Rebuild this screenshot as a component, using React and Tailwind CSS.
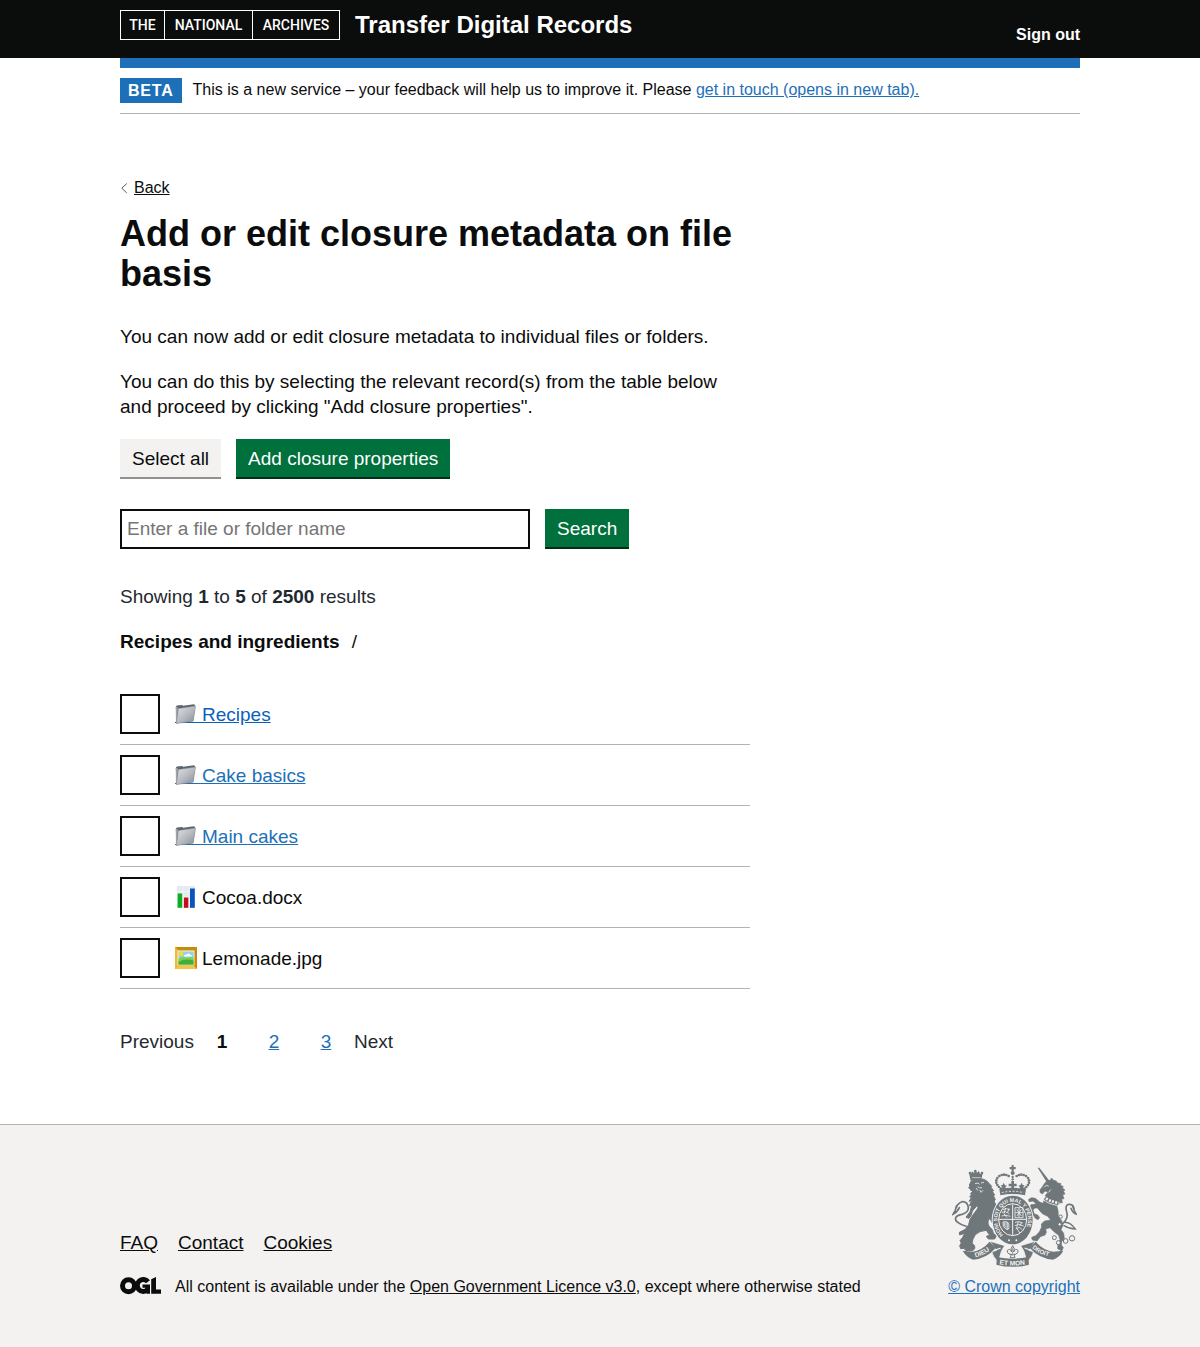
import React from "react";

const linkBlue = "text-[#1d70b8] underline";

function FolderIcon() {
  return (
    <svg className="h-6 w-[27px] shrink-0" viewBox="0 -2 27 24" aria-hidden="true">
      <defs>
        <linearGradient id="folderFront" x1="0" y1="0" x2="1" y2="1">
          <stop offset="0" stopColor="#dfe2e6" />
          <stop offset="0.55" stopColor="#b4b8be" />
          <stop offset="1" stopColor="#84888f" />
        </linearGradient>
      </defs>
      <rect x="0" y="18" width="27" height="1" fill="currentColor" />
      <path d="M0.8 3L1.8 1.4L7 1L8.2 1.8L18.8 0.2L20 1V4L18 17L1.6 19.4Z" fill="#5d666d" />
      <path d="M0.8 3.2L2.4 2.8L3 5L1.6 19.4L0.9 18.8Z" fill="#9ea4aa" />
      <path d="M3.4 4.6L20.7 1.9L18.2 17.2L1.4 19.6Z" fill="url(#folderFront)" stroke="#7d838a" strokeWidth="0.4" />
    </svg>
  );
}

function ChartIcon() {
  return (
    <svg className="h-6 w-[27px] shrink-0" viewBox="0 -1 27 24" aria-hidden="true">
      <rect x="2" y="0" width="18" height="22" fill="#e3eaf2" />
      <path d="M2 5.5H20M2 11H20M2 16.5H20M8 0V22M14 0V22" stroke="#f6f9fc" strokeWidth="0.7" />
      <rect x="2.6" y="7.5" width="4.6" height="14.3" fill="#0fae21" />
      <rect x="8.9" y="11.5" width="4.4" height="10.3" fill="#c80c1b" />
      <rect x="15" y="2.5" width="4.8" height="19.3" fill="#0b54bd" />
    </svg>
  );
}

function PictureIcon() {
  return (
    <svg className="h-6 w-[27px] shrink-0" viewBox="0 -1 27 24" aria-hidden="true">
      <rect x="0" y="0" width="22" height="22" fill="#d59a16" />
      <path d="M0 0H22L19 3H3Z" fill="#c78a10" />
      <path d="M0 0L3 3V19L0 22Z" fill="#eebb35" />
      <path d="M22 0L19 3V19L22 22Z" fill="#c68a10" />
      <path d="M0 22L3 19H19L22 22Z" fill="#f4c542" />
      <rect x="2.5" y="3.5" width="17" height="15" fill="#fff0b8" />
      <rect x="3.5" y="4.5" width="15" height="13" fill="#8ed1f2" />
      <circle cx="6.2" cy="6.8" r="2.2" fill="#ffd92e" />
      <path d="M9 9Q10 6.5 12 7.5Q14 5.5 15.5 8Q17.5 8 17 9.5H9Z" fill="#fff" />
      <path d="M3.5 11.5Q8 9 12 11Q15 9.5 18.5 10.5V17.5H3.5Z" fill="#7fd04c" />
      <path d="M3.5 15Q10 11 18.5 13.5V17.5H3.5Z" fill="#42ae38" />
    </svg>
  );
}

function OglLogo() {
  return (
    <svg className="h-5 w-[41px] shrink-0" viewBox="0 0 41 20" role="img" aria-label="OGL">
      <g fill="none" stroke="#0b0c0c" strokeWidth="5">
        <circle cx="8.5" cy="8.7" r="6" />
        <path d="M28 4.8A6 6 0 1 0 27.5 12.8" />
      </g>
      <path d="M22.5 7.4H30V16.8H26.6L25.5 13.5V10.8H22.5Z" fill="#0b0c0c" />
      <path d="M31.2 2.2L36 0V12.5H41V16.8H31.2Z" fill="#0b0c0c" />
    </svg>
  );
}

const crownBeads = [
  [183, 101], [177, 96], [172, 90], [169, 83], [169, 76], [172, 69], [178, 63], [185, 60], [192, 59], [199, 60], [206, 63],
  [253, 101], [259, 96], [264, 90], [267, 83], [267, 76], [264, 69], [258, 63], [251, 60], [244, 59], [237, 60], [230, 63],
];

function Crest() {
  const gray = "#6f777b";
  const pale = "#f3f2f1";
  return (
    <svg className="h-[102px] w-[125px]" viewBox="36 30 375 306" aria-hidden="true">
      <defs>
        <path id="garterArc" d="M190 239A46 55 0 1 1 246 239" />
        <path id="dieuArc" d="M106 307Q138 299 158 279" />
        <path id="monArc" d="M178 328Q218 335 266 327" />
        <path id="droitArc" d="M276 279Q299 300 336 306" />
      </defs>

      {/* Royal crown */}
      <g fill={gray}>
        <path d="M215 30H221V36H227V43H221V49H215V43H209V36H215Z" />
        <circle cx="218" cy="54" r="6" />
        {crownBeads.map(([x, y]) => (
          <circle key={`${x}-${y}`} cx={x} cy={y} r="4" />
        ))}
        <circle cx="218" cy="66" r="3.5" />
        <circle cx="218" cy="73" r="3.5" />
        <path d="M214 78H222V86H230V94H222V103H214V94H206V86H214Z" />
        <path d="M191 83L195 91L201 92L196 97L198 104H184L187 97L182 91L188 90Z" />
        <path d="M245 83L241 91L235 92L240 97L238 104H252L249 97L254 91L248 90Z" />
        <path d="M178 102Q218 95 258 102L255 121Q218 113 181 121Z" />
      </g>
      <path d="M185 113Q218 105 251 113" fill="none" stroke={pale} strokeWidth="2.5" strokeDasharray="6 5" />

      {/* Lion */}
      <g fill={gray}>
        <path d="M87 53L93 58L96 49L102 54L106 46L111 53L117 48L120 57L128 54L124 74L92 77Z" />
        <circle cx="106" cy="48" r="4" />
        <circle cx="90" cy="54" r="4" />
        <circle cx="126" cy="54" r="4" />
        <path stroke={gray} strokeWidth="3" strokeLinejoin="round" d="M94 78L128 72Q141 75 148 86L155 94L153 97L161 107L157 109L164 120L160 122L166 134L162 138L168 151L166 165L158 178L166 190L168 205L160 211L154 197L146 190Q141 208 149 216L157 224L160 235L169 242L164 252H145L139 244L149 241L139 226Q119 227 106 239L99 252L96 265L103 271L105 280L98 287L78 287L72 280L62 281L59 272L64 264L60 257L68 247L74 235L59 240L58 232L76 223L86 209Q88 191 99 180L114 159L112 151L97 168L94 180L87 190L78 187L84 178L90 171L96 149L88 153L95 137L87 139L95 127L89 126L97 116L91 117L99 108L92 106L91 101L86 99L90 93L88 90Z" />
      </g>
      <g fill="none" stroke={gray} strokeLinecap="round">
        <path d="M78 214Q42 202 47 188Q52 180 66 178Q86 172 85 157Q82 139 66 140Q54 144 49 157" strokeWidth="5" />
        <path d="M50 152Q48 164 39 178Q52 172 58 158" strokeWidth="5" />
      </g>
      <path d="M105 86L114 84L119 88M123 84L132 82M113 95Q118 101 126 98M108 99L114 107M120 105L123 112L129 106" fill="none" stroke={pale} strokeWidth="2.5" />
      <path d="M96 68H122" stroke={pale} strokeWidth="2" />

      {/* Unicorn */}
      <g fill={gray} stroke={gray} strokeWidth="2" strokeLinejoin="round">
        <path d="M293 38L298 38L328 77L320 81Z" strokeWidth="0" />
        <path d="M319 79L332 75L334 69L341 76L349 78L351 83L363 86L361 90L370 95L367 99L375 105L370 108L375 117L368 119L372 131L365 132L367 143L359 144L350 152L354 166L355 184L365 197L369 211L363 224L371 235L373 251L365 260L364 270L370 278L365 288L353 281L354 267L360 254L356 241L342 230L330 218L317 222L319 232L315 240L301 245L291 258L277 255L275 247L287 242L298 231L305 216L304 207L314 198L332 195L323 184L307 176L292 159L284 159L279 165L283 177L293 180L299 188L294 194L286 190L274 172L269 157L273 149L289 147L279 138L267 140L266 133L275 128L286 130L300 142L310 145L313 133L316 121L324 112L315 108L307 117L300 112L300 104L307 96L312 88Z" />
      </g>
      <g fill="none" stroke={gray} strokeLinecap="round">
        <path d="M366 208Q387 190 380 170Q374 150 386 148Q399 147 402 160" strokeWidth="5" />
        <path d="M398 152Q401 166 408 177Q398 174 393 160" strokeWidth="5" />
        <path d="M372 202Q390 200 406 222Q388 222 372 212" strokeWidth="4" />
      </g>
      <path d="M313 96L320 91L326 94M332 104L326 112" fill="none" stroke={pale} strokeWidth="2.5" />
      <path d="M311 124Q324 139 358 144" fill="none" stroke={pale} strokeWidth="8" strokeDasharray="6 4" />
      <path d="M308 132Q323 147 351 151" fill="none" stroke={pale} strokeWidth="2.5" />
      <g fill={pale} stroke={gray} strokeWidth="3">
        <circle cx="362" cy="185" r="5" />
        <circle cx="359" cy="208" r="5" />
        <circle cx="343" cy="248" r="6" />
        <circle cx="355" cy="263" r="6" />
        <circle cx="377" cy="258" r="7" />
        <circle cx="396" cy="250" r="8" />
      </g>

      {/* Garter and shield */}
      <ellipse cx="218" cy="195" rx="63" ry="75" fill={pale} />
      <ellipse cx="218" cy="195" rx="60" ry="73" fill={gray} />
      <ellipse cx="218" cy="194" rx="42" ry="48" fill={gray} stroke={pale} strokeWidth="3" />
      <path d="M218 148V240M176 193H260" stroke={pale} strokeWidth="3" />
      <g fill="none" stroke={pale} strokeWidth="2.5">
        <path d="M188 164Q200 157 210 165M185 172L196 170L208 176M185 183Q197 178 211 184M197 159L192 176L201 188M207 160L203 172" />
        <path d="M225 158H249V188H225ZM230 163L244 183M244 163L231 183M237 159V187M226 173H250" />
        <path d="M189 201Q208 195 207 217Q204 232 190 214ZM193 202V215M198 201V221M203 202V224" />
        <path d="M225 202Q236 197 248 204M225 212L236 208L251 213M227 222L238 217L246 223M235 200L230 218L239 234M246 201L239 213" />
      </g>
      <text fill={pale} fontFamily="Liberation Sans, Arial, sans-serif" fontWeight="700" fontSize="16">
        <textPath href="#garterArc">HONI SOIT QUI MAL Y PENSE</textPath>
      </text>
      <circle cx="207" cy="256" r="3" fill={pale} />
      <circle cx="229" cy="256" r="3" fill={pale} />

      {/* Motto ribbon */}
      <path d="M150 259L194 272Q182 286 178 311L172 318Q158 304 156 291L169 286Z" fill={gray} stroke={pale} strokeWidth="2" />
      <path d="M286 259L242 272Q254 286 258 311L264 318Q278 304 280 291L267 286Z" fill={gray} stroke={pale} strokeWidth="2" />
      <path d="M164 286L182 279M272 286L254 279" stroke={pale} strokeWidth="4" />
      <path d="M68 287L98 290Q126 286 149 260L167 279Q140 311 99 314Q79 307 68 287Z" fill={gray} />
      <path d="M370 287L340 290Q310 286 287 260L269 279Q298 311 339 314Q359 307 370 287Z" fill={gray} />
      <path d="M171 306Q218 316 265 306L267 329Q218 342 169 329Z" fill={gray} />
      <g fill={pale} fontFamily="Liberation Sans, Arial, sans-serif" fontWeight="700">
        <text fontSize="20"><textPath href="#dieuArc">DIEU</textPath></text>
        <text fontSize="20"><textPath href="#monArc">ET MON</textPath></text>
        <text fontSize="18"><textPath href="#droitArc">DROIT</textPath></text>
      </g>
      <path d="M218 272Q226 281 221 291Q226 279 234 286Q237 294 226 298H222L225 308H211L214 298H210Q199 294 202 286Q210 279 215 291Q210 281 218 272Z" fill={pale} stroke={gray} strokeWidth="3" />
      <path d="M218 278V302M209 298H227" stroke={gray} strokeWidth="2" />
    </svg>
  );
}

const rows = [
  { name: "Recipes", Icon: FolderIcon, link: "text-[#0b5fbd]" },
  { name: "Cake basics", Icon: FolderIcon, link: "text-[#1d70b8]" },
  { name: "Main cakes", Icon: FolderIcon, link: "text-[#1d70b8]" },
  { name: "Cocoa.docx", Icon: ChartIcon },
  { name: "Lemonade.jpg", Icon: PictureIcon },
];

const greenButton =
  "h-10 shrink-0 border-b-2 border-[#002d18] bg-[#00703c] px-3 text-[19px] leading-[25px] text-white";

export default function App() {
  return (
    <div className="bg-white font-['Liberation_Sans',Arial,sans-serif] text-[19px] leading-[25px] text-[#0b0c0c]">
      <header className="bg-[#0b0c0c] px-4 text-white">
        <div className="mx-auto flex h-[58px] max-w-[960px] items-start justify-between pt-[10px]">
          <div className="flex items-start gap-[15px]">
            <a
              href="#home"
              className="flex h-[30px] w-[220px] divide-x divide-white border border-white font-['Roboto',sans-serif] text-sm font-medium leading-7"
            >
              <span className="w-11 text-center">THE</span>
              <span className="w-[88px] text-center">NATIONAL</span>
              <span className="flex-1 text-center">ARCHIVES</span>
            </a>
            <a href="#service" className="text-2xl font-bold leading-[30px]">
              Transfer Digital Records
            </a>
          </div>
          <a href="#sign-out" className="pt-[15px] text-base font-bold leading-5">
            Sign out
          </a>
        </div>
      </header>

      <div className="px-4">
        <div className="mx-auto max-w-[960px]">
          <div className="h-[10px] bg-[#1d70b8]" />
          <div className="flex items-start gap-[11px] border-b border-[#b1b4b6] py-[10px] text-base leading-6">
            <strong className="h-[25px] bg-[#1d70b8] px-2 leading-[25px] tracking-wider text-white">BETA</strong>
            <p>
              This is a new service – your feedback will help us to improve it. Please{" "}
              <a href="#contact" className={linkBlue}>
                get in touch (opens in new tab).
              </a>
            </p>
          </div>

          <main className="max-w-[630px] pb-[70px] pt-16">
            <a href="#back" className="flex w-fit items-center gap-[6px] text-base leading-5">
              <svg className="h-3 w-2" viewBox="0 0 8 12" aria-hidden="true">
                <path d="M6.8 1.5L1.8 6.2L6.8 11" fill="none" stroke="#505a5f" strokeWidth="1" />
              </svg>
              <span className="underline">Back</span>
            </a>
            <h1 className="mb-[30px] mt-4 text-4xl font-bold leading-10">
              Add or edit closure metadata on file basis
            </h1>
            <p className="mb-5">You can now add or edit closure metadata to individual files or folders.</p>
            <p className="mb-5">
              You can do this by selecting the relevant record(s) from the table below and proceed by clicking "Add
              closure properties".
            </p>

            <div className="mb-[30px] flex gap-[15px]">
              <button type="button" className="h-10 border-b-2 border-[#929191] bg-[#f3f2f1] px-3">
                Select all
              </button>
              <button type="button" className={greenButton}>
                Add closure properties
              </button>
            </div>

            <form className="mb-[35px] flex gap-[15px]" onSubmit={(e) => e.preventDefault()}>
              <input
                type="search"
                aria-label="Search for a file or folder"
                placeholder="Enter a file or folder name"
                className="h-10 w-full max-w-[410px] appearance-none border-2 border-[#0b0c0c] px-[5px] placeholder:text-[#757575]"
              />
              <button type="submit" className={greenButton}>
                Search
              </button>
            </form>

            <p className="mb-5 text-[#1f2a30]">
              Showing <b>1</b> to <b>5</b> of <b>2500</b> results
            </p>
            <p className="mb-10">
              <b className="mr-3">Recipes and ingredients</b>/
            </p>

            <ul>
              {rows.map(({ name, Icon, link }) => (
                <li key={name} className="mb-[10px] flex items-center gap-[15px] border-b border-[#b1b4b6] pb-[10px]">
                  <input
                    type="checkbox"
                    id={name}
                    aria-label={name}
                    className="size-10 shrink-0 appearance-none border-2 border-[#0b0c0c] bg-white checked:bg-[#0b0c0c]"
                  />
                  {link ? (
                    <a href={`#${name}`} className={`flex items-center underline ${link}`}>
                      <Icon />
                      {name}
                    </a>
                  ) : (
                    <label htmlFor={name} className="flex items-center">
                      <Icon />
                      {name}
                    </label>
                  )}
                </li>
              ))}
            </ul>

            <nav aria-label="Pagination" className="mt-10 flex text-[#1f2a30]">
              <span>Previous</span>
              <ol className="mx-[22px] flex gap-10">
                <li className="w-3 text-center font-bold text-[#0b0c0c]" aria-current="page">
                  1
                </li>
                <li className="w-3 text-center">
                  <a href="#page-2" className={linkBlue}>
                    2
                  </a>
                </li>
                <li className="w-3 text-center">
                  <a href="#page-3" className={linkBlue}>
                    3
                  </a>
                </li>
              </ol>
              <span>Next</span>
            </nav>
          </main>
        </div>
      </div>

      <footer className="border-t border-[#b1b4b6] bg-[#f3f2f1] px-4 pb-[50px] pt-10">
        <div className="mx-auto flex max-w-[960px] items-end justify-between">
          <div>
            <ul className="mb-[22px] flex gap-5">
              {["FAQ", "Contact", "Cookies"].map((item) => (
                <li key={item}>
                  <a href={`#${item.toLowerCase()}`} className="underline">
                    {item}
                  </a>
                </li>
              ))}
            </ul>
            <div className="flex items-center gap-[14px] text-base leading-5">
              <OglLogo />
              <p>
                All content is available under the{" "}
                <a href="#licence" className="underline">
                  Open Government Licence v3.0
                </a>
                , except where otherwise stated
              </p>
            </div>
          </div>
          <a href="#copyright" className="flex flex-col items-center gap-[10px] text-base leading-5 text-[#1d70b8] underline">
            <Crest />
            © Crown copyright
          </a>
        </div>
      </footer>
    </div>
  );
}
